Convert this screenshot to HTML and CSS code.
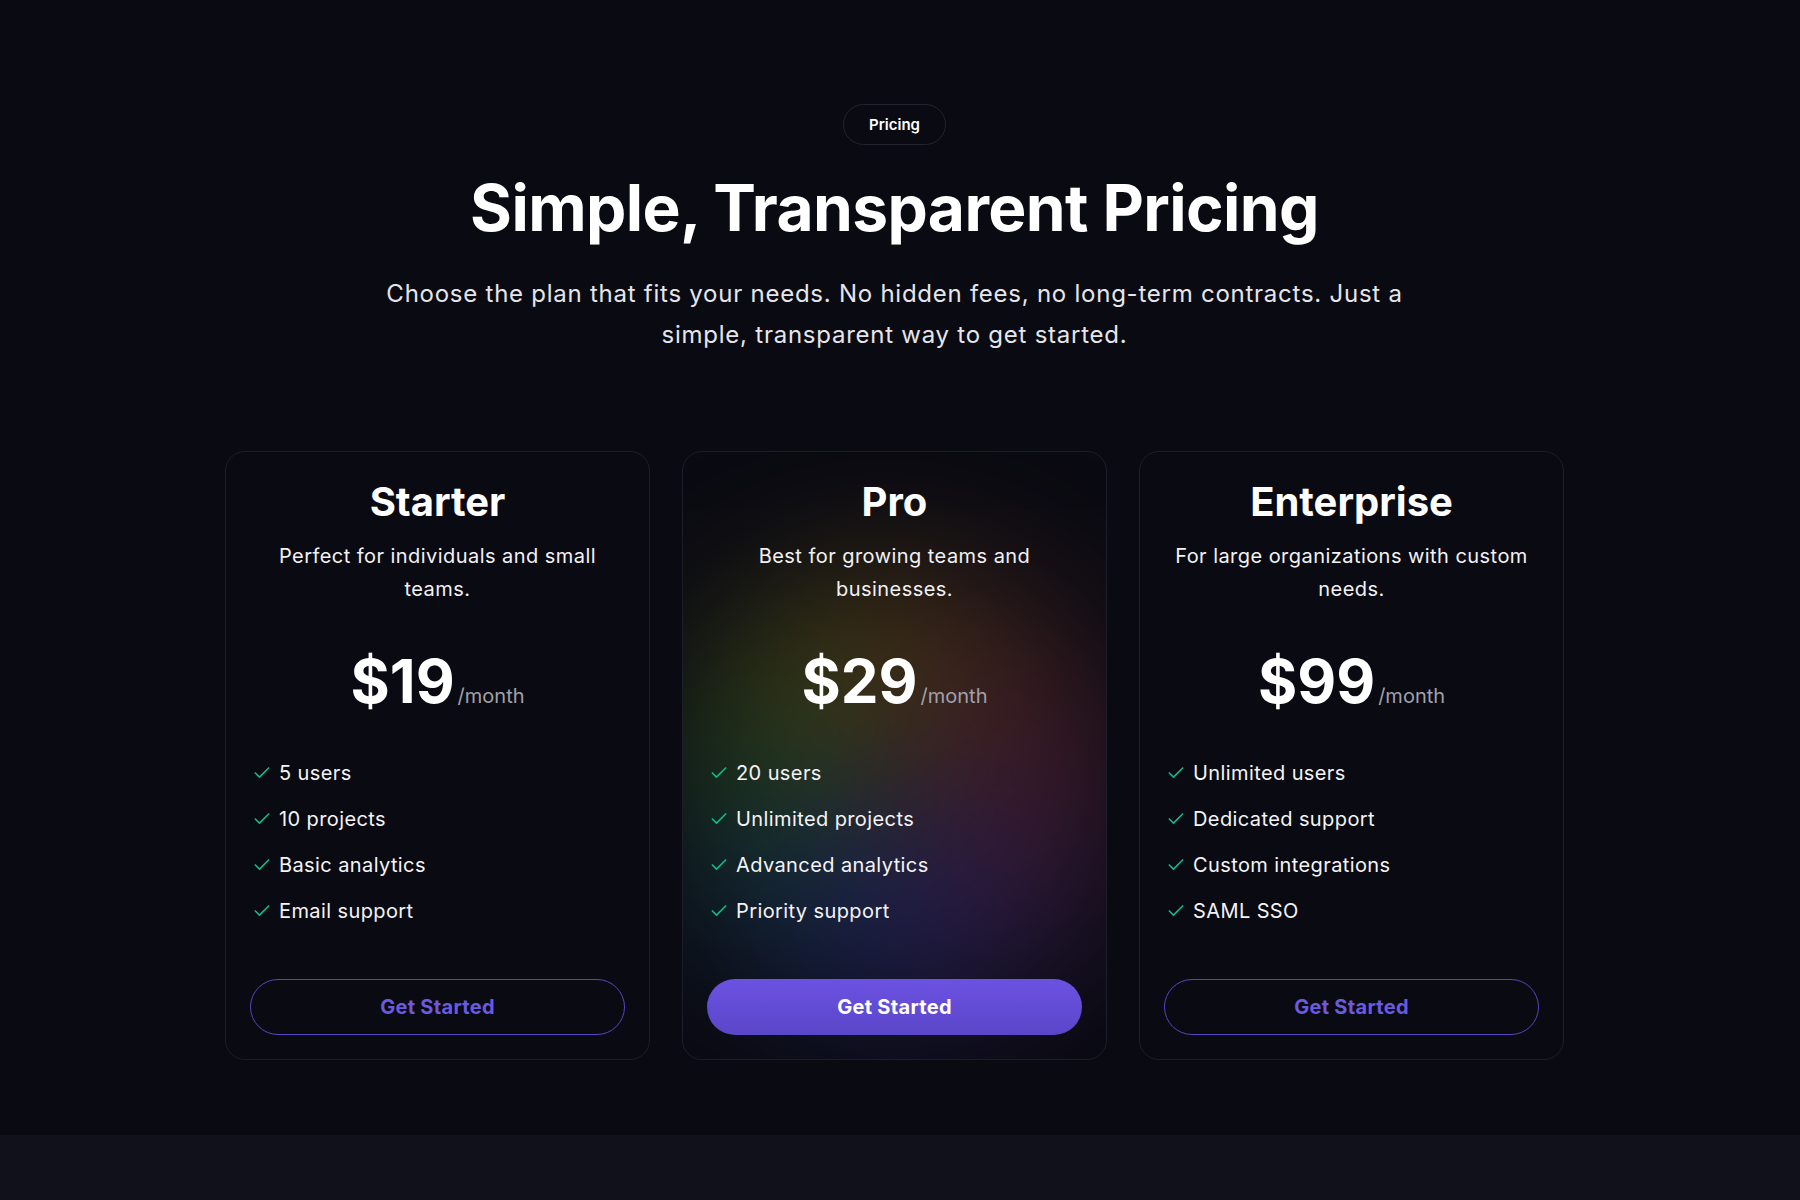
FILE: index.html
```
<!DOCTYPE html>
<html lang="en">
<head>
<meta charset="utf-8">
<title>Pricing</title>
<link rel="stylesheet" href="styles.css">
</head>
<body>
<main class="pricing">
  <span class="badge">Pricing</span>
  <h1 class="title">Simple, Transparent Pricing</h1>
  <p class="subtitle">Choose the plan that fits your needs. No hidden fees, no long-term contracts. Just a simple, transparent way to get started.</p>

  <div class="plans">
    <section class="plan">
      <h2 class="plan-name">Starter</h2>
      <p class="plan-desc">Perfect for individuals and small teams.</p>
      <div class="price"><span class="amount">$19</span><span class="period">/month</span></div>
      <ul class="features">
        <li><svg class="check" viewBox="0 0 24 24"><path d="M20 6 9 17l-5-5"/></svg>5 users</li>
        <li><svg class="check" viewBox="0 0 24 24"><path d="M20 6 9 17l-5-5"/></svg>10 projects</li>
        <li><svg class="check" viewBox="0 0 24 24"><path d="M20 6 9 17l-5-5"/></svg>Basic analytics</li>
        <li><svg class="check" viewBox="0 0 24 24"><path d="M20 6 9 17l-5-5"/></svg>Email support</li>
      </ul>
      <button class="btn btn-outline">Get Started</button>
    </section>

    <section class="plan plan-featured">
      <div class="glow"></div>
      <h2 class="plan-name">Pro</h2>
      <p class="plan-desc">Best for growing teams and businesses.</p>
      <div class="price"><span class="amount">$29</span><span class="period">/month</span></div>
      <ul class="features">
        <li><svg class="check" viewBox="0 0 24 24"><path d="M20 6 9 17l-5-5"/></svg>20 users</li>
        <li><svg class="check" viewBox="0 0 24 24"><path d="M20 6 9 17l-5-5"/></svg>Unlimited projects</li>
        <li><svg class="check" viewBox="0 0 24 24"><path d="M20 6 9 17l-5-5"/></svg>Advanced analytics</li>
        <li><svg class="check" viewBox="0 0 24 24"><path d="M20 6 9 17l-5-5"/></svg>Priority support</li>
      </ul>
      <button class="btn btn-filled">Get Started</button>
    </section>

    <section class="plan">
      <h2 class="plan-name">Enterprise</h2>
      <p class="plan-desc">For large organizations with custom needs.</p>
      <div class="price"><span class="amount">$99</span><span class="period">/month</span></div>
      <ul class="features">
        <li><svg class="check" viewBox="0 0 24 24"><path d="M20 6 9 17l-5-5"/></svg>Unlimited users</li>
        <li><svg class="check" viewBox="0 0 24 24"><path d="M20 6 9 17l-5-5"/></svg>Dedicated support</li>
        <li><svg class="check" viewBox="0 0 24 24"><path d="M20 6 9 17l-5-5"/></svg>Custom integrations</li>
        <li><svg class="check" viewBox="0 0 24 24"><path d="M20 6 9 17l-5-5"/></svg>SAML SSO</li>
      </ul>
      <button class="btn btn-outline">Get Started</button>
    </section>
  </div>
</main>
<footer class="band"></footer>
</body>
</html>
```

FILE: styles.css
```
* { box-sizing: border-box; }

html, body {
  margin: 0;
  padding: 0;
  background: #0a0a12;
  font-family: Inter, "Noto Sans", "Liberation Sans", sans-serif;
  color: #ffffff;
}

.pricing {
  display: flex;
  flex-direction: column;
  align-items: center;
  padding: 104px 11px 75px 0;
  height: 1135px;
}

.badge {
  display: inline-flex;
  align-items: center;
  height: 41px;
  padding: 0 25px;
  border: 1px solid #24242f;
  border-radius: 999px;
  font-size: 15px;
  font-weight: 600;
  color: #ffffff;
}

.title {
  margin: 24px 0 0;
  font-size: 64px;
  line-height: 77px;
  font-weight: 700;
  letter-spacing: -0.6px;
  color: #ffffff;
  text-align: center;
}

.subtitle {
  margin: 27px 0 0;
  max-width: 1040px;
  font-size: 24px;
  line-height: 41px;
  font-weight: 400;
  letter-spacing: 0.75px;
  color: #e6e6ea;
  text-align: center;
}

.plans {
  margin-top: 96px;
  display: grid;
  grid-template-columns: repeat(3, 425px);
  gap: 32px;
}

.plan {
  position: relative;
  overflow: hidden;
  display: flex;
  flex-direction: column;
  align-items: center;
  height: 609px;
  padding: 26px 24px 24px;
  border: 1px solid #1e1e2a;
  border-radius: 20px;
  background: #0a0a12;
}

.plan > *:not(.glow) { position: relative; z-index: 1; }

.glow {
  position: absolute;
  left: 50%;
  top: 335px;
  width: 450px;
  height: 450px;
  transform: translate(-50%, -50%);
  border-radius: 50%;
  background: conic-gradient(from 0deg,
    #6a4a18 0deg,
    #6a2a30 60deg,
    #5a2450 110deg,
    #3a2a78 160deg,
    #22307a 200deg,
    #1a4a5a 235deg,
    #1f5a2a 270deg,
    #5e6618 315deg,
    #6a4a18 360deg);
  filter: blur(70px);
  opacity: 0.55;
}

.plan-name {
  margin: 0;
  font-size: 40px;
  line-height: 48px;
  font-weight: 700;
  color: #ffffff;
}

.plan-desc {
  margin: 14px 0 0;
  font-size: 20px;
  line-height: 33px;
  letter-spacing: 0.45px;
  color: #f2f2f4;
  text-align: center;
}

.price {
  margin-top: 42px;
  display: flex;
  align-items: baseline;
}

.amount {
  font-size: 60px;
  line-height: 66px;
  font-weight: 700;
  color: #ffffff;
}

.period {
  margin-left: 3px;
  font-size: 20px;
  color: #a1a1aa;
}

.features {
  align-self: stretch;
  list-style: none;
  margin: 44px 0 0;
  padding: 0 0 0 2px;
  display: flex;
  flex-direction: column;
  gap: 16px;
}

.features li {
  display: flex;
  align-items: center;
  gap: 7px;
  font-size: 20px;
  line-height: 30px;
  letter-spacing: 0.4px;
  color: #f4f4f5;
}

.check {
  width: 20px;
  height: 20px;
  flex: none;
  fill: none;
  stroke: #10b981;
  stroke-width: 2;
  stroke-linecap: round;
  stroke-linejoin: round;
}

.btn {
  margin-top: auto;
  align-self: stretch;
  height: 56px;
  border-radius: 28px;
  font-family: inherit;
  font-size: 20px;
  font-weight: 700;
  letter-spacing: 0.3px;
  cursor: pointer;
}

.btn-outline {
  background: transparent;
  border: 1px solid #5646c4;
  color: #6a5ae0;
}

.btn-filled {
  border: none;
  background: linear-gradient(180deg, #6b52e2 0%, #5b46c9 100%);
  color: #ffffff;
}

.band {
  height: 65px;
  background: #11111c;
}
```
